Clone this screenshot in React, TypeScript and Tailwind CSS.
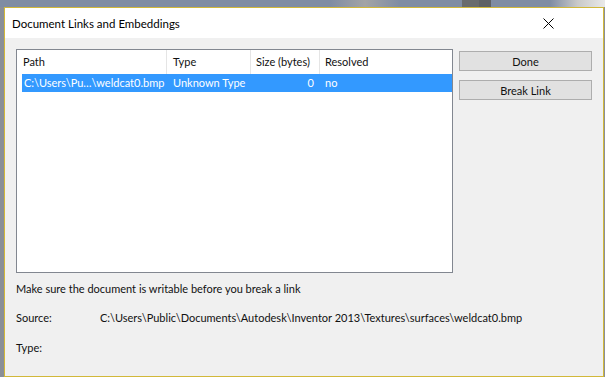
import React from 'react';

const font = { fontFamily: 'Lato, "Noto Sans", sans-serif' };

export default function App() {
  return (
    <div className="relative w-[605px] h-[377px] overflow-hidden bg-[#8a8f98] whitespace-nowrap" style={font}>
      {/* desktop strip behind the dialog */}
      <div className="relative h-[7px] bg-[#7f8ca3]">
        <div className="absolute left-[330px] top-0 h-[7px] w-[70px] bg-gradient-to-r from-[#7f8ca3] via-[#a3a4a6] to-[#7f8ca3]" />
        <div className="absolute left-[462px] top-0 h-[7px] w-[17px] bg-[#696b6e]" />
        <div className="absolute left-[479px] top-0 h-[7px] w-[12px] bg-[#5f6165]" />
        <div className="absolute left-[550px] top-0 h-[7px] w-[55px] bg-gradient-to-r from-[#7f8ca3] via-[#c9c9c9] to-[#e9e9e9]" />
      </div>

      <div className="ml-[4px] w-[600px] h-[370px] border border-[#d2b83a] bg-[#f0f0f0] flex flex-col">
        {/* title bar */}
        <div className="h-[30px] bg-white flex items-center justify-between pl-[7px] pr-[49px] pt-[1px]">
          <span className="text-[11.5px] text-black">Document Links and Embeddings</span>
          <svg width="11" height="11" viewBox="0 0 11 11">
            <path d="M0.5 0.5L10.5 10.5M10.5 0.5L0.5 10.5" stroke="#000" strokeWidth="1" />
          </svg>
        </div>

        {/* client area */}
        <div className="flex-1 pl-[11px] pt-[11px] text-[11px] text-[#111]">
          <div className="flex gap-[6px]">
            <div className="w-[437px] h-[224px] border border-[#828790] bg-white">
              <div className="flex h-[24px] items-center">
                <div className="w-[150px] h-full pl-[6px] flex items-center border-r border-[#e5e5e5]">Path</div>
                <div className="w-[84px] h-full pl-[6px] flex items-center border-r border-[#e5e5e5]">Type</div>
                <div className="w-[69px] h-full pl-[5px] flex items-center border-r border-[#e5e5e5]">Size (bytes)</div>
                <div className="flex-1 h-full pl-[5px] flex items-center">Resolved</div>
              </div>
              <div className="ml-[5px] h-[18px] bg-[#3399ff] text-white flex items-center">
                <div className="w-[145px] pl-[2px]">C:\Users\Pu…\weldcat0.bmp</div>
                <div className="w-[84px] pl-[6px]">Unknown Type</div>
                <div className="w-[69px] pr-[6px] text-right">0</div>
                <div className="flex-1 pl-[5px]">no</div>
              </div>
            </div>
            <div className="flex flex-col gap-[9px] pt-[2px]">
              <button className="w-[133px] h-[20px] bg-[#e1e1e1] border border-[#adadad] text-[11px] leading-none">Done</button>
              <button className="w-[133px] h-[20px] bg-[#e1e1e1] border border-[#adadad] text-[11px] leading-none">Break Link</button>
            </div>
          </div>

          <div className="mt-[8px] h-[16px] leading-[16px]">Make sure the document is writable before you break a link</div>
          <div className="mt-[13px] h-[16px] leading-[16px] flex">
            <span className="w-[84px]">Source:</span>
            <span>C:\Users\Public\Documents\Autodesk\Inventor 2013\Textures\surfaces\weldcat0.bmp</span>
          </div>
          <div className="mt-[14px] h-[16px] leading-[16px]">Type:</div>
        </div>
      </div>
    </div>
  );
}
